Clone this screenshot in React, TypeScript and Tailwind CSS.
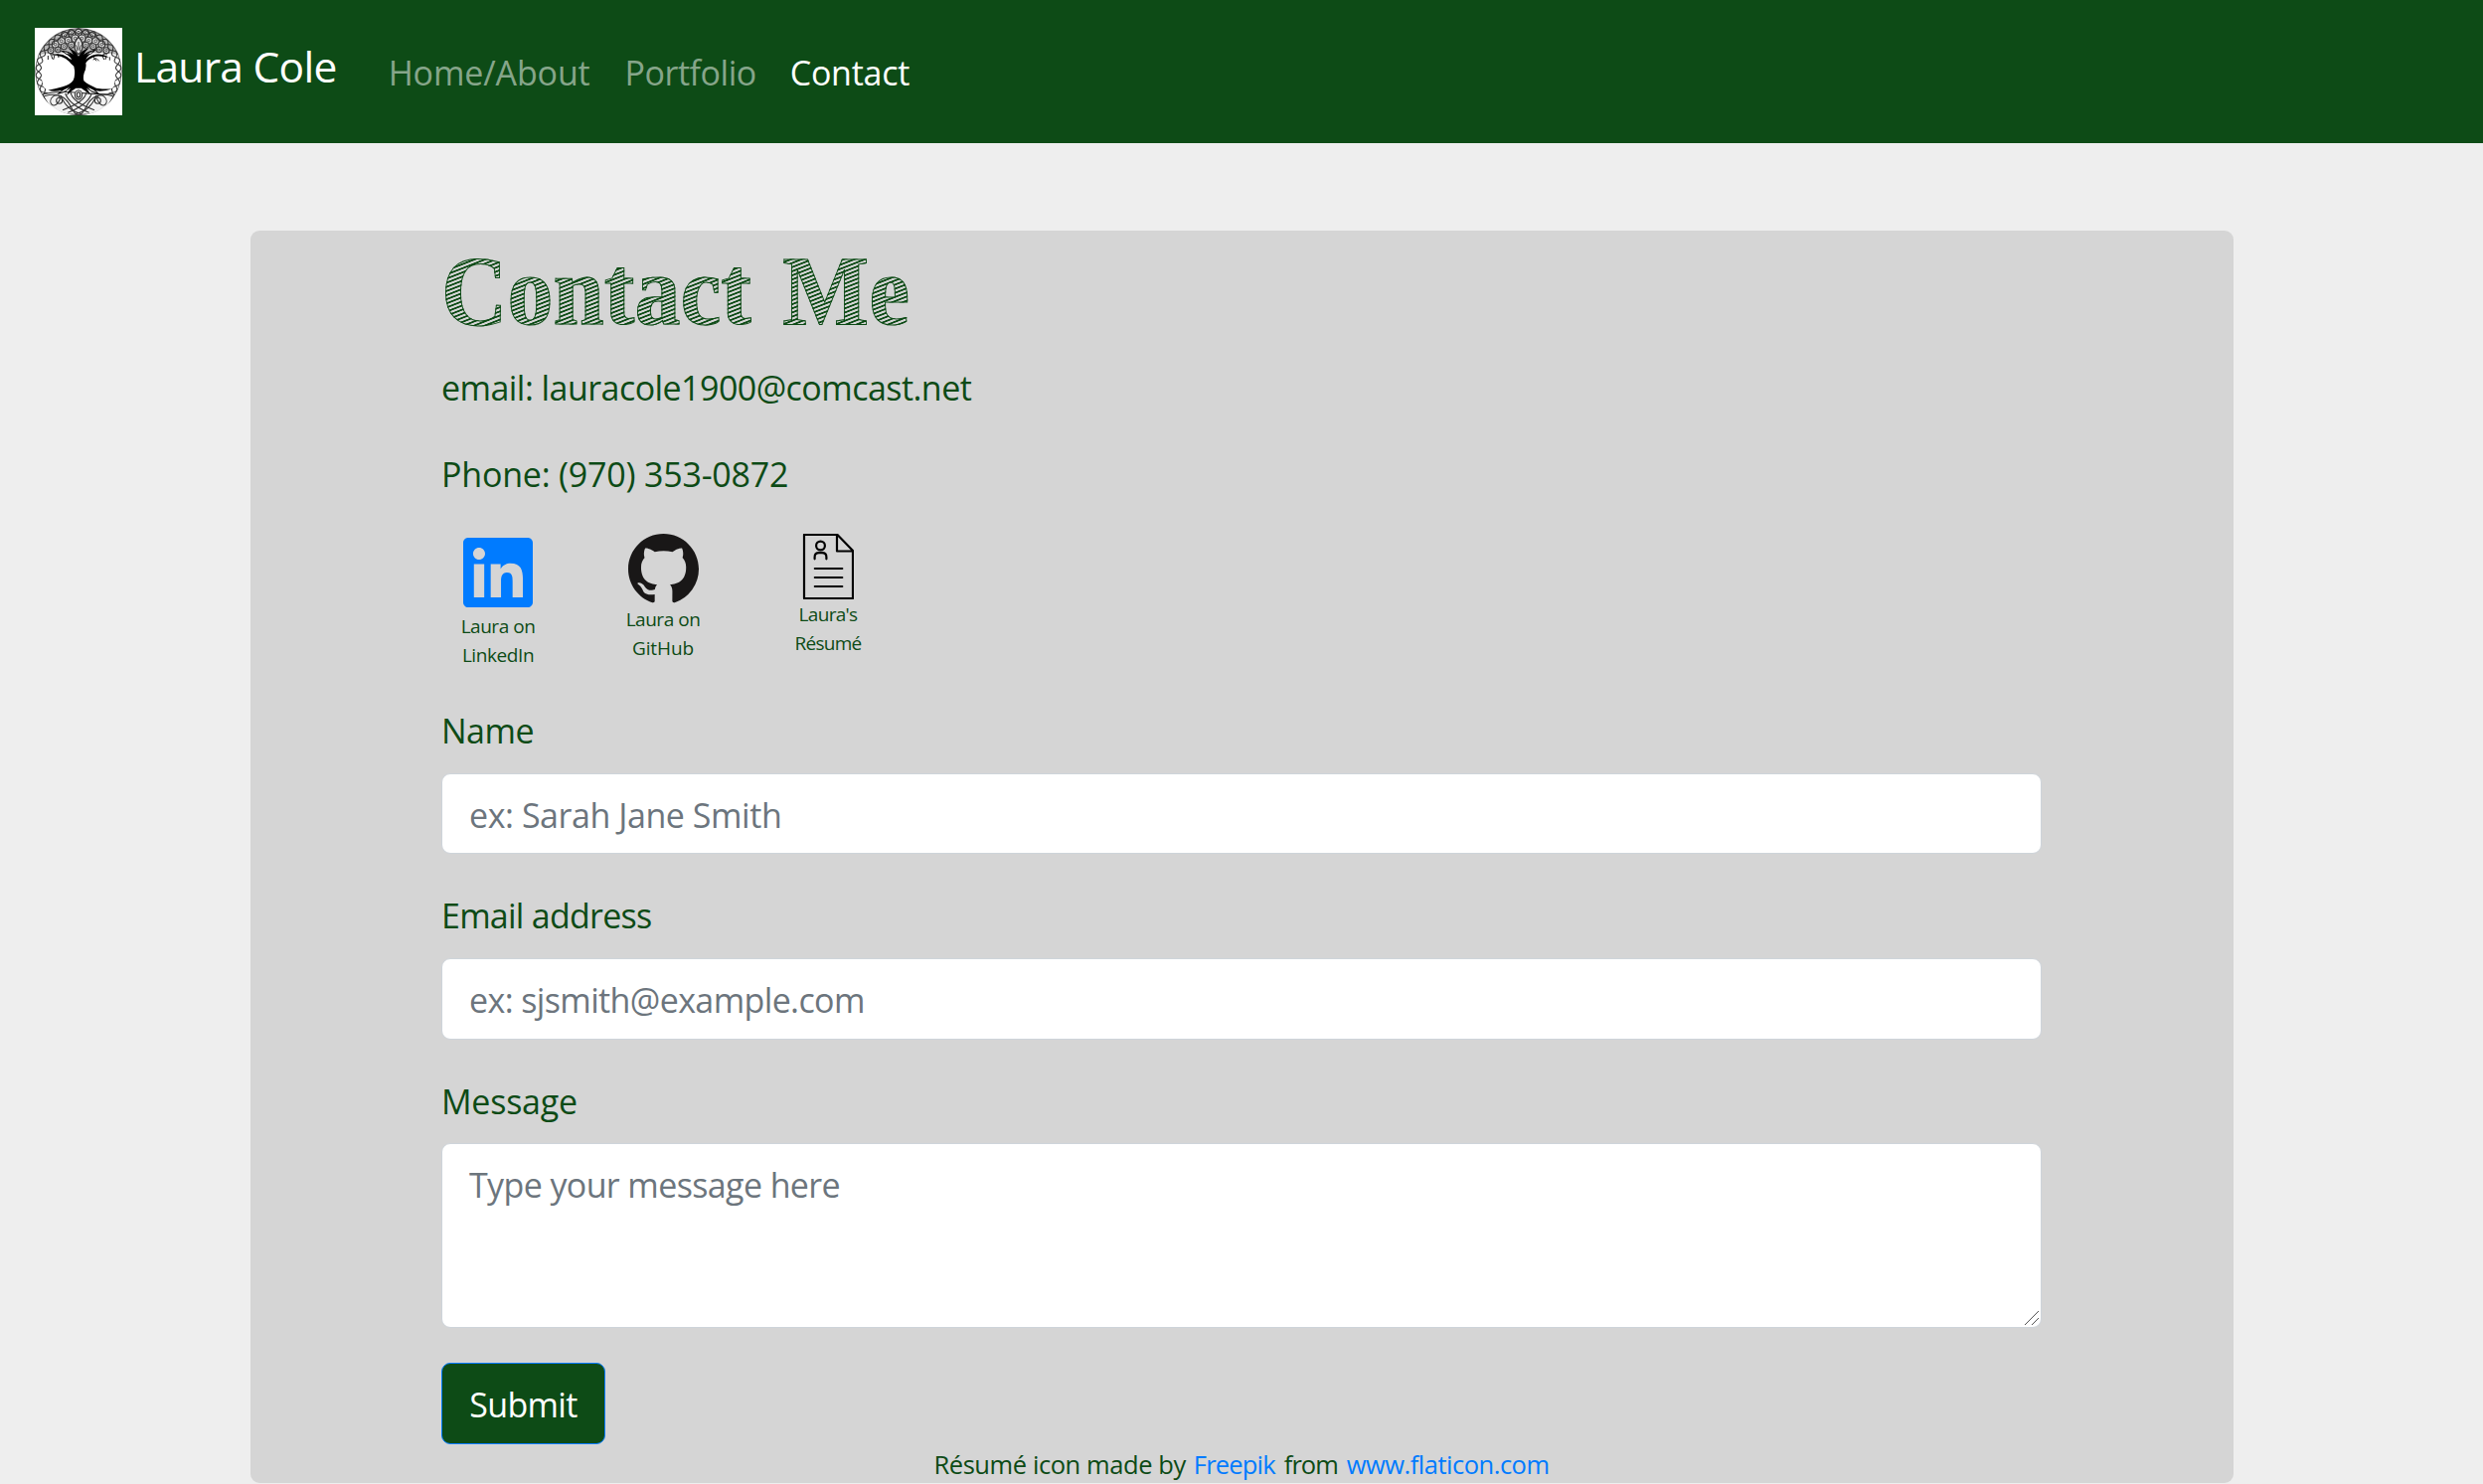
import type { ReactNode } from 'react';

/** Closed wavy line around the emblem's rim. */
function braid(radius: number, amplitude: number, waves: number, phase: number) {
  const points: string[] = [];
  for (let i = 0; i < 360; i++) {
    const a = (i / 360) * Math.PI * 2;
    const r = radius + amplitude * Math.sin(a * waves + phase);
    points.push(`${(132 + r * Math.cos(a)).toFixed(1)} ${(132 + r * Math.sin(a)).toFixed(1)}`);
  }
  return `M${points.join('L')}Z`;
}

const canopyKnots: [number, number, number][] = [
  [132, 14, 10], [112, 18, 10], [152, 18, 10], [92, 24, 10], [172, 24, 10],
  [122, 32, 11], [142, 32, 11], [101, 38, 10], [163, 38, 10], [80, 40, 11], [184, 40, 11],
  [62, 50, 10], [202, 50, 10], [88, 56, 9], [176, 56, 9], [110, 52, 9], [154, 52, 9],
  [70, 66, 8], [194, 66, 8], [48, 68, 9], [216, 68, 9], [52, 84, 6], [212, 84, 6],
];

function TreeLogo() {
  return (
    <svg viewBox="0 0 264 264" className="size-[88px] shrink-0 bg-white" aria-label="Tree of life">
      <defs>
        <clipPath id="emblem">
          <circle cx="132" cy="132" r="132" />
        </clipPath>
      </defs>
      <g clipPath="url(#emblem)" fill="none" stroke="#333" strokeWidth="3.2">
        <path d="M0 84Q40 74 76 76Q132 80 188 76Q226 74 264 84V0H0Z" fill="#b5b5b5" stroke="none" />
        {canopyKnots.map(([x, y, r]) => (
          <g key={`${x}-${y}`}>
            <circle cx={x} cy={y} r={r} fill="#ddd" />
            <circle cx={x} cy={y} r={r / 2.6} strokeWidth="2.4" />
          </g>
        ))}
        <path d={braid(121, 8, 17, 0)} />
        <path d={braid(121, 8, 17, Math.PI)} />
        <circle cx="132" cy="132" r="130" strokeWidth="2" />
        <path d="M132 28C116 44 116 68 132 80C148 68 148 44 132 28Z" fill="#ddd" strokeWidth="4" />
        <path d="M132 42v26M124 52q8 14 0 20M140 52q-8 14 0 20" strokeWidth="2.5" />
        {/* roots knotwork */}
        <path d="M24 200Q70 190 132 196T240 200Q216 264 132 264T24 200Z" fill="#f2f2f2" />
        <path d="M28 206C70 196 86 206 70 226S40 224 52 210S92 204 110 240S132 258 160 262" />
        <path d="M236 206C194 196 178 206 194 226S224 224 212 210S172 204 154 240S132 258 104 262" />
        <path d="M92 198Q104 232 164 256M172 198Q160 232 100 256M108 194Q112 224 180 248M156 194Q152 224 84 248M78 204Q96 250 142 260M186 204Q168 250 122 260" />
        <circle cx="74" cy="220" r="9" />
        <circle cx="190" cy="220" r="9" />
        <ellipse cx="132" cy="202" rx="11" ry="14" fill="#ddd" />
        <ellipse cx="132" cy="202" rx="5" ry="8" />
      </g>
      {/* open sky on both sides of the trunk */}
      <path d="M28 98Q32 82 48 82Q78 78 104 92Q120 110 118 132Q114 158 96 168Q70 178 52 186Q34 190 26 178Q14 138 28 98Z" fill="#fff" />
      <path d="M236 98Q232 82 216 82Q186 80 162 92Q150 108 152 132Q154 158 170 168Q194 178 212 186Q232 188 238 178Q250 138 236 98Z" fill="#fff" />
      <path d="M40 84v12M50 82l3 12M60 82l-4 14M70 80l2 10M176 86l10 14M186 92l8 8M186 92l-10 4M204 84l5 12M216 84l-3 12M226 88v10" stroke="#222" strokeWidth="3" fill="none" />
      {/* trunk, boughs and roots */}
      <path d="M48 82Q78 74 98 88Q104 94 112 96Q106 84 76 68Q104 70 116 80Q112 70 100 60Q124 68 132 86Q140 68 164 60Q152 72 148 80Q162 70 190 64Q160 82 154 96Q164 84 184 80Q206 78 224 90Q200 84 184 86Q162 92 154 106Q156 114 153 126Q144 144 148 160Q160 172 186 182Q214 186 236 184Q206 194 184 190Q194 198 198 202Q176 198 156 182Q164 192 168 202Q150 188 140 182L124 182Q110 190 96 204Q100 192 108 182Q90 196 66 202Q72 194 82 188Q58 194 40 188Q66 184 84 178Q108 170 116 158Q124 140 118 116Q108 108 104 102Q84 82 48 82Z" fill="#000" />
      <path d="M84 70Q96 70 110 82Q94 82 84 70ZM180 70Q168 70 154 82Q170 82 180 70ZM74 198Q84 184 108 178Q96 194 74 198ZM190 198Q180 184 156 178Q168 194 190 198Z" fill="#fff" stroke="#000" strokeWidth="2.5" />
    </svg>
  );
}

function LinkedInIcon() {
  return (
    <svg viewBox="0 32 448 448" className="mb-[5px] size-[70px] fill-[#007bff]">
      <path d="M416 32H31.9C14.3 32 0 46.5 0 64.3v383.4C0 465.5 14.3 480 31.9 480H416c17.6 0 32-14.5 32-32.3V64.3c0-17.8-14.4-32.3-32-32.3zM135.4 416H69V202.2h66.5V416zm-33.2-243c-21.3 0-38.5-17.3-38.5-38.5S80.9 96 102.2 96c21.2 0 38.5 17.3 38.5 38.5 0 21.3-17.2 38.5-38.5 38.5zm282.1 243h-66.4V312c0-24.8-.5-56.7-34.5-56.7-34.6 0-39.9 27-39.9 54.9V416h-66.4V202.2h63.7v29.2h.9c8.9-16.8 30.6-34.5 62.9-34.5 67.2 0 79.7 44.3 79.7 101.9V416z" />
    </svg>
  );
}

function GitHubIcon() {
  return (
    <svg viewBox="0 0 16 16" className="mb-px ml-px size-[71px] fill-[#191717]">
      <path d="M8 0C3.58 0 0 3.58 0 8c0 3.54 2.29 6.53 5.47 7.59.4.07.55-.17.55-.38 0-.19-.01-.82-.01-1.49-2.01.37-2.53-.49-2.69-.94-.09-.23-.48-.94-.82-1.13-.28-.15-.68-.52-.01-.53.63-.01 1.08.58 1.23.82.72 1.21 1.87.87 2.33.66.07-.52.28-.87.51-1.07-1.78-.2-3.64-.89-3.64-3.95 0-.87.31-1.59.82-2.15-.08-.2-.36-1.02.08-2.12 0 0 .67-.21 2.2.82.64-.18 1.32-.27 2-.27s1.36.09 2 .27c1.53-1.04 2.2-.82 2.2-.82.44 1.1.16 1.92.08 2.12.51.56.82 1.27.82 2.15 0 3.07-1.87 3.75-3.65 3.95.29.25.54.73.54 1.48 0 1.07-.01 1.93-.01 2.2 0 .21.15.46.55.38A8.01 8.01 0 0 0 16 8c0-4.42-3.58-8-8-8z" />
    </svg>
  );
}

function ResumeIcon() {
  return (
    <svg viewBox="-1 0 52 66" className="mb-px h-[66px] w-[52px]" fill="none" stroke="#000" strokeWidth="2.2" strokeLinecap="round">
      <path d="M1 1H34.5L50 17V65H1ZM34 1V17.5H50" strokeLinejoin="round" />
      <circle cx="17.5" cy="12" r="4.4" />
      <path d="M11.6 25.3V23.5Q11.6 19.2 16 19.2H19Q23.4 19.2 23.4 23.5V25.3" />
      <path d="M11.8 35H39.3M11.8 44H39.3M11.8 53H39.3" />
    </svg>
  );
}

function IconLink({ icon, pad, children }: { icon: ReactNode; pad: string; children: ReactNode }) {
  return (
    <a href="#" className={`flex w-[166px] flex-col items-center text-center text-[19px] leading-[29px] ${pad}`}>
      {icon}
      {children}
    </a>
  );
}

const field =
  'block w-full rounded-[9px] border border-[#ced4da] bg-white px-[27px] text-[34px] leading-[53px] outline-none placeholder:text-[#6c757d] placeholder:opacity-100';

export default function App() {
  return (
    <div className="h-[1493px] overflow-hidden bg-[#eee] font-['Open_Sans','Noto_Sans',sans-serif] text-[34px] leading-[53px] text-[#0d4b16]">
      <nav className="flex h-36 items-center bg-[#0d4b16] pl-[35px]">
        <TreeLogo />
        <a href="#" className="ml-3 pb-3 text-[42.5px] tracking-[-0.72px] text-white">Laura Cole</a>
        <a href="#" className="ml-[52px] pt-0.5 tracking-[-0.13px] text-[#86a58a]">Home/About</a>
        <a href="#" className="ml-[35px] pt-0.5 tracking-[-0.48px] text-[#86a58a]">Portfolio</a>
        <a href="#" className="ml-[34px] pt-0.5 tracking-[-0.25px] text-white">Contact</a>
      </nav>

      <main className="mt-[88px] mr-[251px] ml-[252px] h-[1260px] rounded-[9px] bg-[#d5d5d5] pr-[193px] pl-[192px]">
        <h1 className="h-[118px] w-[560px] origin-left scale-x-[0.93] bg-[repeating-linear-gradient(160deg,#0d4b16_0px,#0d4b16_1.1px,#d5d5d5_1.8px,#d5d5d5_3.2px,#0d4b16_3.9px)] bg-clip-text font-['Liberation_Serif',serif] text-[99px] leading-[122px] font-bold whitespace-nowrap text-transparent [-webkit-text-stroke:1px_#0d4b16]">
          Contact <span className="ml-[9px]">Me</span>
        </h1>
        <p className="mt-[14px] tracking-[-0.55px]">email: lauracole1900@comcast.net</p>
        <p className="mt-[34px] tracking-[-0.21px]">Phone: (970) 353-0872</p>

        <div className="-ml-[26px] flex h-[205px] pt-[33px]">
          <IconLink pad="pt-1" icon={<LinkedInIcon />}>
            <span className="tracking-[-0.47px]">Laura on</span>
            <span className="tracking-[-0.42px]">LinkedIn</span>
          </IconLink>
          <IconLink pad="pt-0" icon={<GitHubIcon />}>
            <span className="tracking-[-0.47px]">Laura on</span>
            <span className="tracking-[-0.11px]">GitHub</span>
          </IconLink>
          <IconLink pad="pt-0" icon={<ResumeIcon />}>
            <span className="tracking-[-0.69px]">Laura's</span>
            <span className="tracking-[-0.74px]">Résumé</span>
          </IconLink>
        </div>

        <form>
          <label className="block tracking-[-0.49px]">Name</label>
          <input className={`mt-4 h-[81px] pt-[2px] tracking-[-0.44px] ${field}`} placeholder="ex: Sarah Jane Smith" />
          <label className="mt-9 block tracking-[-0.75px]">Email address</label>
          <input className={`mt-4 h-[82px] pt-[2px] tracking-[-0.62px] ${field}`} placeholder="ex: sjsmith@example.com" />
          <label className="mt-9 block tracking-[-0.24px]">Message</label>
          <div className="relative mt-[15px]">
            <textarea className={`h-[186px] resize-none pt-[15px] tracking-[-0.62px] ${field}`} placeholder="Type your message here" />
            <svg viewBox="0 0 14 14" className="absolute right-[3px] bottom-[3px] size-3.5" stroke="#555" strokeWidth="1">
              <path d="M0 14L14 0M7 14L14 7" />
            </svg>
          </div>
          <button type="button" className="mt-[35px] block h-[82px] w-[165px] rounded-[9px] border border-[#007bff] bg-[#0d4b16] pt-0.5 tracking-[-0.67px] text-white">
            Submit
          </button>
        </form>

        <footer className="flex h-[39px] justify-center text-[25.5px] leading-[41px] whitespace-nowrap">
          <span className="tracking-[-0.42px]">Résumé icon made by</span>
          <a href="#" className="ml-[8px] tracking-[-0.8px] text-[#007bff]">Freepik</a>
          <span className="ml-[9px] tracking-[-1px]">from</span>
          <a href="#" className="ml-[9px] tracking-[-0.5px] text-[#007bff]">www.flaticon.com</a>
        </footer>
      </main>
    </div>
  );
}
